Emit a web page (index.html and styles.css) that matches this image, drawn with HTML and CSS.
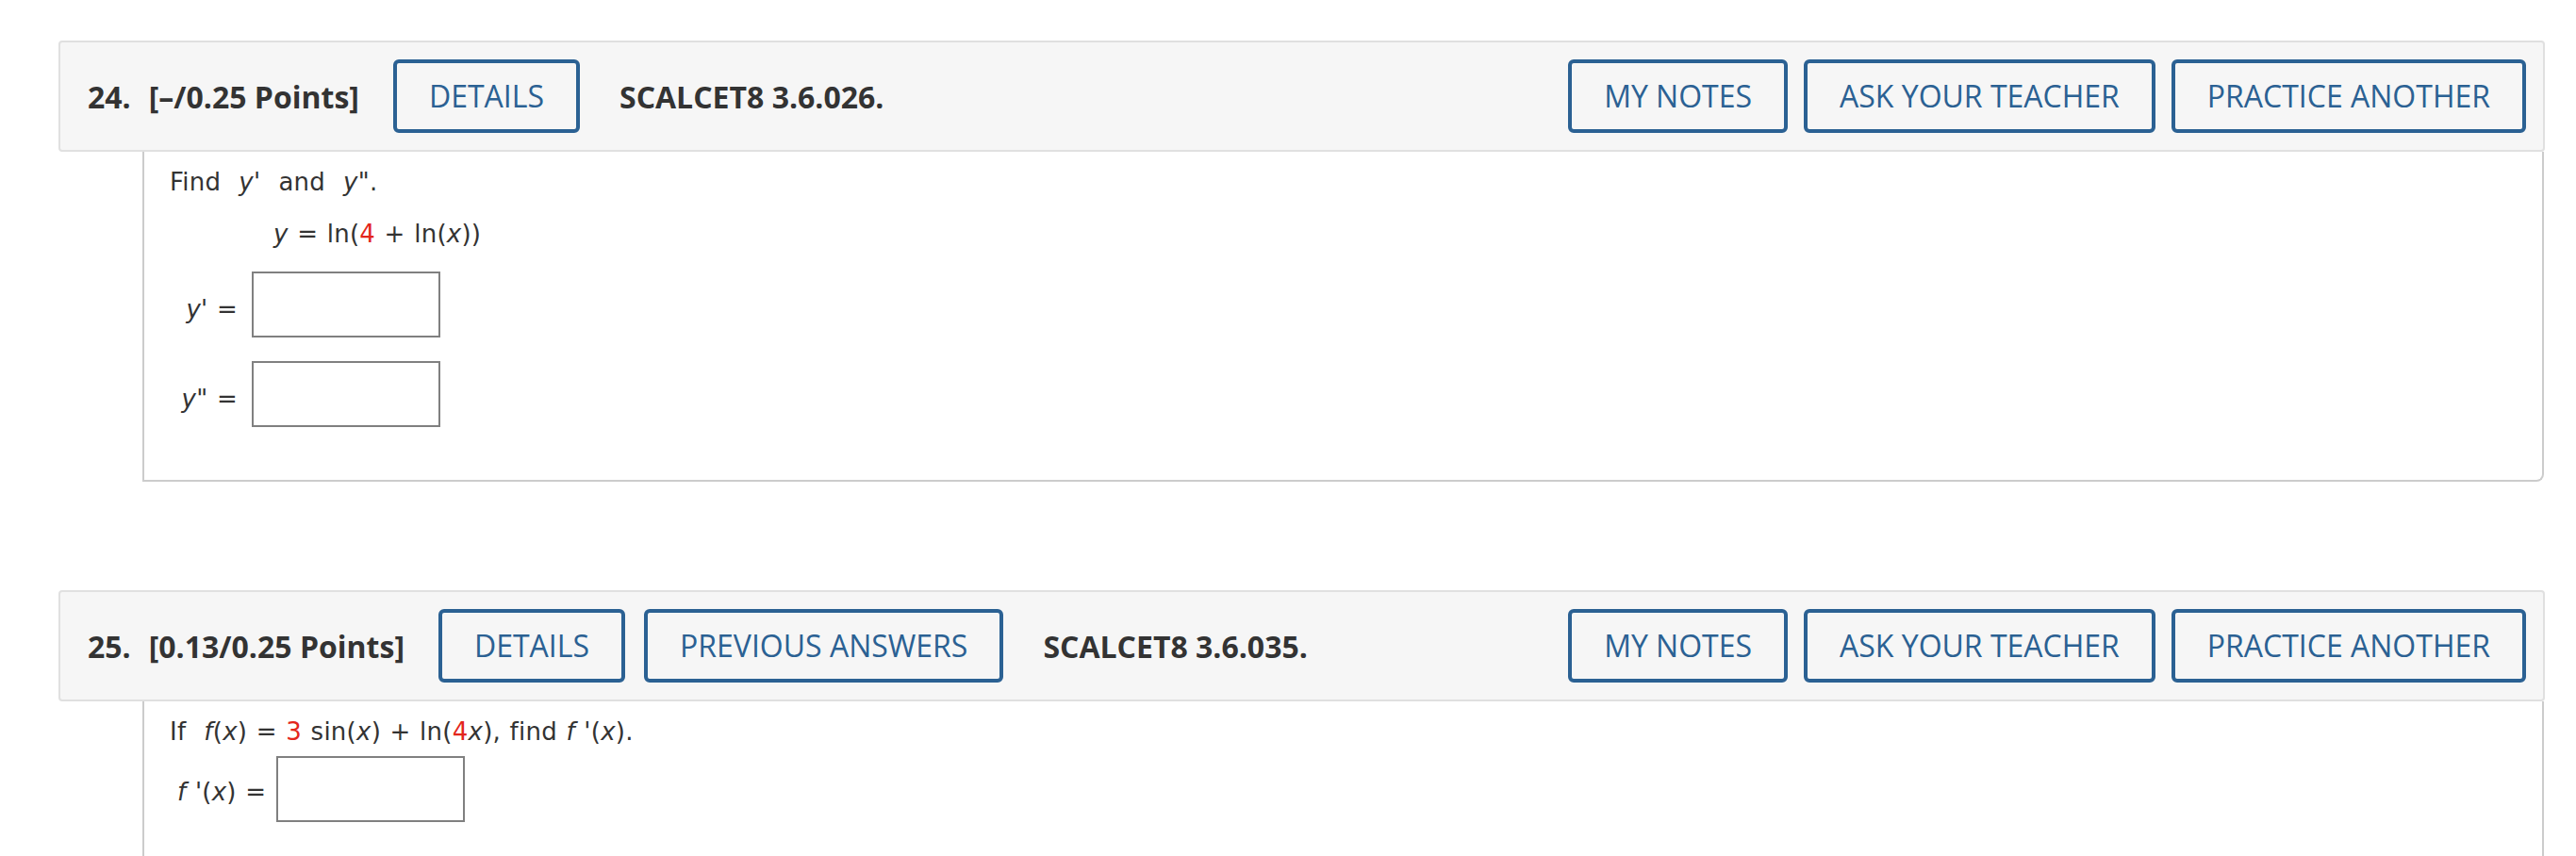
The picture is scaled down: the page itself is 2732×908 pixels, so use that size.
FILE: index.html
```html
<!DOCTYPE html>
<html lang="en">
<head>
<meta charset="utf-8">
<title>WebAssign</title>
<link rel="stylesheet" href="styles.css">
</head>
<body>
<div class="page">
  <section class="question q24">
    <div class="qhead">
      <span class="qnum">24.</span>
      <span class="qpts">[–/0.25 Points]</span>
      <button type="button" class="btn btn-first">DETAILS</button>
      <span class="qcode">SCALCET8 3.6.026.</span>
      <div class="qactions">
        <button type="button" class="btn">MY NOTES</button>
        <button type="button" class="btn">ASK YOUR TEACHER</button>
        <button type="button" class="btn">PRACTICE ANOTHER</button>
      </div>
    </div>
    <div class="qbody body24">
      <p class="prompt">Find&nbsp; <i>y'</i>&nbsp; and&nbsp; <i>y"</i>.</p>
      <p class="equation"><i>y</i> = ln(<span class="red">4</span> + ln(<i>x</i>))</p>
      <div class="answers">
        <div class="arow"><span class="alabel"><i>y'</i> =</span><input class="abox" type="text" aria-label="y prime"></div>
        <div class="arow"><span class="alabel"><i>y"</i> =</span><input class="abox" type="text" aria-label="y double prime"></div>
      </div>
    </div>
  </section>

  <section class="question q25">
    <div class="qhead">
      <span class="qnum">25.</span>
      <span class="qpts">[0.13/0.25 Points]</span>
      <button type="button" class="btn btn-first">DETAILS</button>
      <button type="button" class="btn btn-next">PREVIOUS ANSWERS</button>
      <span class="qcode">SCALCET8 3.6.035.</span>
      <div class="qactions">
        <button type="button" class="btn">MY NOTES</button>
        <button type="button" class="btn">ASK YOUR TEACHER</button>
        <button type="button" class="btn">PRACTICE ANOTHER</button>
      </div>
    </div>
    <div class="qbody body25">
      <p class="prompt">If&nbsp; <i>f</i>(<i>x</i>) = <span class="red">3</span> sin(<i>x</i>) + ln(<span class="red">4</span><i>x</i>), find <i>f</i> '(<i>x</i>).</p>
      <div class="arow arow-inline"><span class="alabel"><i>f</i> '(<i>x</i>) =</span><input class="abox" type="text" aria-label="f prime of x"></div>
    </div>
  </section>
</div>
</body>
</html>
```

FILE: styles.css
```css
html, body {
  margin: 0;
  padding: 0;
  background: #ffffff;
  overflow: hidden;
}

.page {
  padding: 43px 33px 0 62px;
}

.question {
  margin-bottom: 115px;
}

.qhead {
  display: flex;
  align-items: center;
  height: 118px;
  box-sizing: border-box;
  background: #f6f6f6;
  border: 2px solid #e0e0e0;
  border-radius: 4px;
  padding: 0 18px 0 29px;
  font-family: "Open Sans", "Liberation Sans", sans-serif;
  color: #333333;
}

.qnum,
.qpts,
.qcode {
  font-family: "Open Sans", "Liberation Sans", sans-serif;
  font-weight: 700;
  font-size: 32px;
  white-space: nowrap;
}

.qpts {
  margin-left: 19px;
}

.btn {
  font-family: "Open Sans", "Liberation Sans", sans-serif;
  font-weight: 500;
  font-size: 32px;
  line-height: 70px;
  height: 78px;
  box-sizing: border-box;
  padding: 0 34px;
  color: #2b6193;
  background: transparent;
  border: 4px solid #2b6193;
  border-radius: 6px;
  white-space: nowrap;
  cursor: pointer;
}

.btn-first {
  margin-left: 36px;
}

.btn-next {
  margin-left: 20px;
}

.qcode {
  margin-left: 42px;
}

.qactions {
  margin-left: auto;
  display: flex;
  gap: 17px;
}

.qbody {
  margin: 0 1px 0 89px;
  border: 2px solid #cccccc;
  border-top: 0;
  border-radius: 0 0 8px 0;
  padding: 14px 29px 56px 27px;
  font-family: "DejaVu Sans", Verdana, sans-serif;
  font-size: 26px;
  line-height: 36px;
  letter-spacing: 0.25px;
  word-spacing: 1px;
  color: #333333;
}

.body25 {
  padding-bottom: 200px;
}

.qbody p {
  margin: 0;
}

.qbody i {
  font-style: italic;
}

.red {
  color: #e3261c;
}

.equation {
  padding-left: 110px;
  margin-top: 19px !important;
}

.answers {
  margin-top: 22px;
  display: flex;
  flex-direction: column;
  gap: 25px;
}

.arow {
  display: flex;
  align-items: center;
}

.alabel {
  width: 72px;
  text-align: right;
  margin-right: 15px;
  padding-top: 10px;
  white-space: nowrap;
}

.abox {
  width: 200px;
  height: 70px;
  box-sizing: border-box;
  border: 2px solid #808080;
  border-radius: 0;
  background: #ffffff;
  padding: 0;
  margin: 0;
}

.arow-inline {
  margin-top: 8px;
}

.arow-inline .alabel {
  width: auto;
  margin-left: 8px;
  margin-right: 11px;
  padding-top: 6px;
}
```
